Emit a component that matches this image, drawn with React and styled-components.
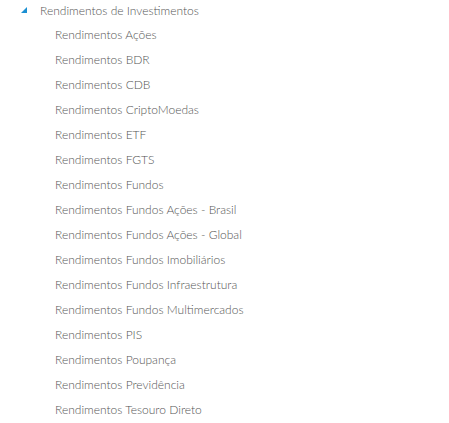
import React from "react";
import styled, { createGlobalStyle } from "styled-components";

const Global = createGlobalStyle`
  html, body { margin: 0; padding: 0; background: #fff; }
  body { font-family: Lato, "Open Sans", sans-serif; }
`;

const Tree = styled.ul`
  list-style: none;
  margin: 0;
  padding: 0 0 0 21px;
`;

const Node = styled.li`
  margin: 0;
  padding: 0;
`;

const Row = styled.div`
  display: flex;
  align-items: center;
  height: 25px;
  padding-left: ${(p) => p.$indent || 0}px;
  font-size: 12px;
  font-weight: 300;
  color: #555;
  white-space: nowrap;
`;

const RootRow = styled(Row)`
  height: 24px;
  margin-top: -2px;
`;

const Toggle = styled.svg`
  width: 6px;
  height: 6px;
  margin-right: 13px;
  flex: none;
`;

const Children = styled.ul`
  list-style: none;
  margin: 0;
  padding: 0;
`;

const items = [
  "Rendimentos Ações",
  "Rendimentos BDR",
  "Rendimentos CDB",
  "Rendimentos CriptoMoedas",
  "Rendimentos ETF",
  "Rendimentos FGTS",
  "Rendimentos Fundos",
  "Rendimentos Fundos Ações - Brasil",
  "Rendimentos Fundos Ações - Global",
  "Rendimentos Fundos Imobiliários",
  "Rendimentos Fundos Infraestrutura",
  "Rendimentos Fundos Multimercados",
  "Rendimentos PIS",
  "Rendimentos Poupança",
  "Rendimentos Previdência",
  "Rendimentos Tesouro Direto",
];

export default function App() {
  return (
    <>
      <Global />
      <Tree>
        <Node>
          <RootRow>
            <Toggle viewBox="0 0 6 6">
              <polygon points="6,0 6,6 0,6" fill="#1b8fd2" />
            </Toggle>
            Rendimentos de Investimentos
          </RootRow>
          <Children>
            {items.map((t) => (
              <Node key={t}>
                <Row $indent={34}>{t}</Row>
              </Node>
            ))}
          </Children>
        </Node>
      </Tree>
    </>
  );
}
